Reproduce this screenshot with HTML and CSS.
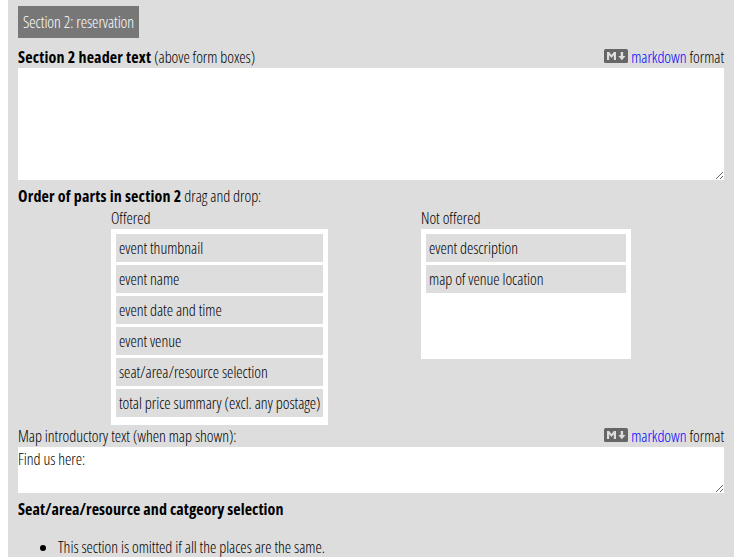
FILE: index.html
```html
<!DOCTYPE html>
<html lang="en">
<head>
<meta charset="utf-8">
<title>Section 2: reservation</title>
<link rel="stylesheet" href="styles.css">
</head>
<body>
<main class="panel">
  <h2 class="tag">Section 2: reservation</h2>
  <div class="label-row header-label">
    <span><b>Section 2 header text</b> (above form boxes)</span>
    <span class="format"><svg class="md" viewBox="0 0 24 14"><rect width="24" height="14" rx="1.5"/><path d="M3 11V3h2.2l2.3 3 2.3-3H12v8H9.8V6.2L7.5 9 5.2 6.2V11zM16.7 3h2.4v4h2.4L17.9 11.2 14.3 7h2.4z"/></svg><a href="#">markdown</a> format</span>
  </div>
  <textarea class="field header-field"></textarea>
  <div class="label-row order-label"><span><b>Order of parts in section 2</b> drag and drop:</span></div>
  <div class="lists">
    <section class="offered">
      <div class="list-title">Offered</div>
      <ul class="list">
        <li>event thumbnail</li>
        <li>event name</li>
        <li>event date and time</li>
        <li>event venue</li>
        <li>seat/area/resource selection</li>
        <li>total price summary (excl. any postage)</li>
      </ul>
    </section>
    <section class="not-offered">
      <div class="list-title">Not offered</div>
      <ul class="list">
        <li>event description</li>
        <li>map of venue location</li>
      </ul>
    </section>
  </div>
  <div class="label-row map-label">
    <span>Map introductory text (when map shown):</span>
    <span class="format"><svg class="md" viewBox="0 0 24 14"><rect width="24" height="14" rx="1.5"/><path d="M3 11V3h2.2l2.3 3 2.3-3H12v8H9.8V6.2L7.5 9 5.2 6.2V11zM16.7 3h2.4v4h2.4L17.9 11.2 14.3 7h2.4z"/></svg><a href="#">markdown</a> format</span>
  </div>
  <textarea class="field map-field">Find us here:</textarea>
  <h3 class="subhead">Seat/area/resource and catgeory selection</h3>
  <ul class="notes"><li>This section is omitted if all the places are the same.</li></ul>
</main>
</body>
</html>
```
FILE: styles.css
```css
* { box-sizing: border-box; }
html { overflow: hidden; }
body {
  margin: 0;
  background: #fff;
  color: #000;
  font: 300 16px/22px "Open Sans", sans-serif;
  font-stretch: 75%;
  letter-spacing: -0.04px;
}
.panel {
  width: 726px;
  height: 557px;
  margin-left: 8px;
  padding: 6px 10px 0;
  background: #ddd;
  overflow: hidden;
}
b { font-weight: 700; letter-spacing: 0.17px; }
.subhead { font-weight: 700; letter-spacing: 0.06px; }
.tag {
  width: 121px;
  height: 32px;
  margin: 0;
  padding: 5px;
  background: #777;
  color: #fff;
  font-size: 16px;
  font-weight: 300;
  white-space: nowrap;
}
.label-row { display: flex; justify-content: space-between; height: 22px; white-space: pre; }
.header-label { margin-top: 8px; }
.format a { color: #00f; text-decoration: none; }
.md { width: 24px; height: 14px; margin-right: 3px; vertical-align: 0; }
.md rect { fill: #666; }
.md path { fill: #ddd; }
.field {
  display: block;
  width: 706px;
  margin: 0;
  padding: 1px 0;
  border: 0;
  background: #fff;
  color: #000;
  font: inherit;
  letter-spacing: inherit;
  resize: vertical;
}
.header-field { height: 112px; }
.order-label { margin-top: 5px; }
.lists { display: flex; gap: 93px; margin-left: 93px; height: 218px; }
.list-title { height: 22px; }
.list { margin: 0; padding: 5px; background: #fff; list-style: none; }
.list li { height: 28px; margin-bottom: 3px; padding: 3px; background: #ddd; white-space: nowrap; }
.offered { width: 217px; }
.offered .list { height: 196px; }
.not-offered { width: 210px; }
.not-offered .list { height: 130px; }
.map-field { height: 46px; }
.subhead { margin: 5px 0 0; font-size: 16px; }
.notes { margin: 16px 0 0; padding-left: 40px; }
```
